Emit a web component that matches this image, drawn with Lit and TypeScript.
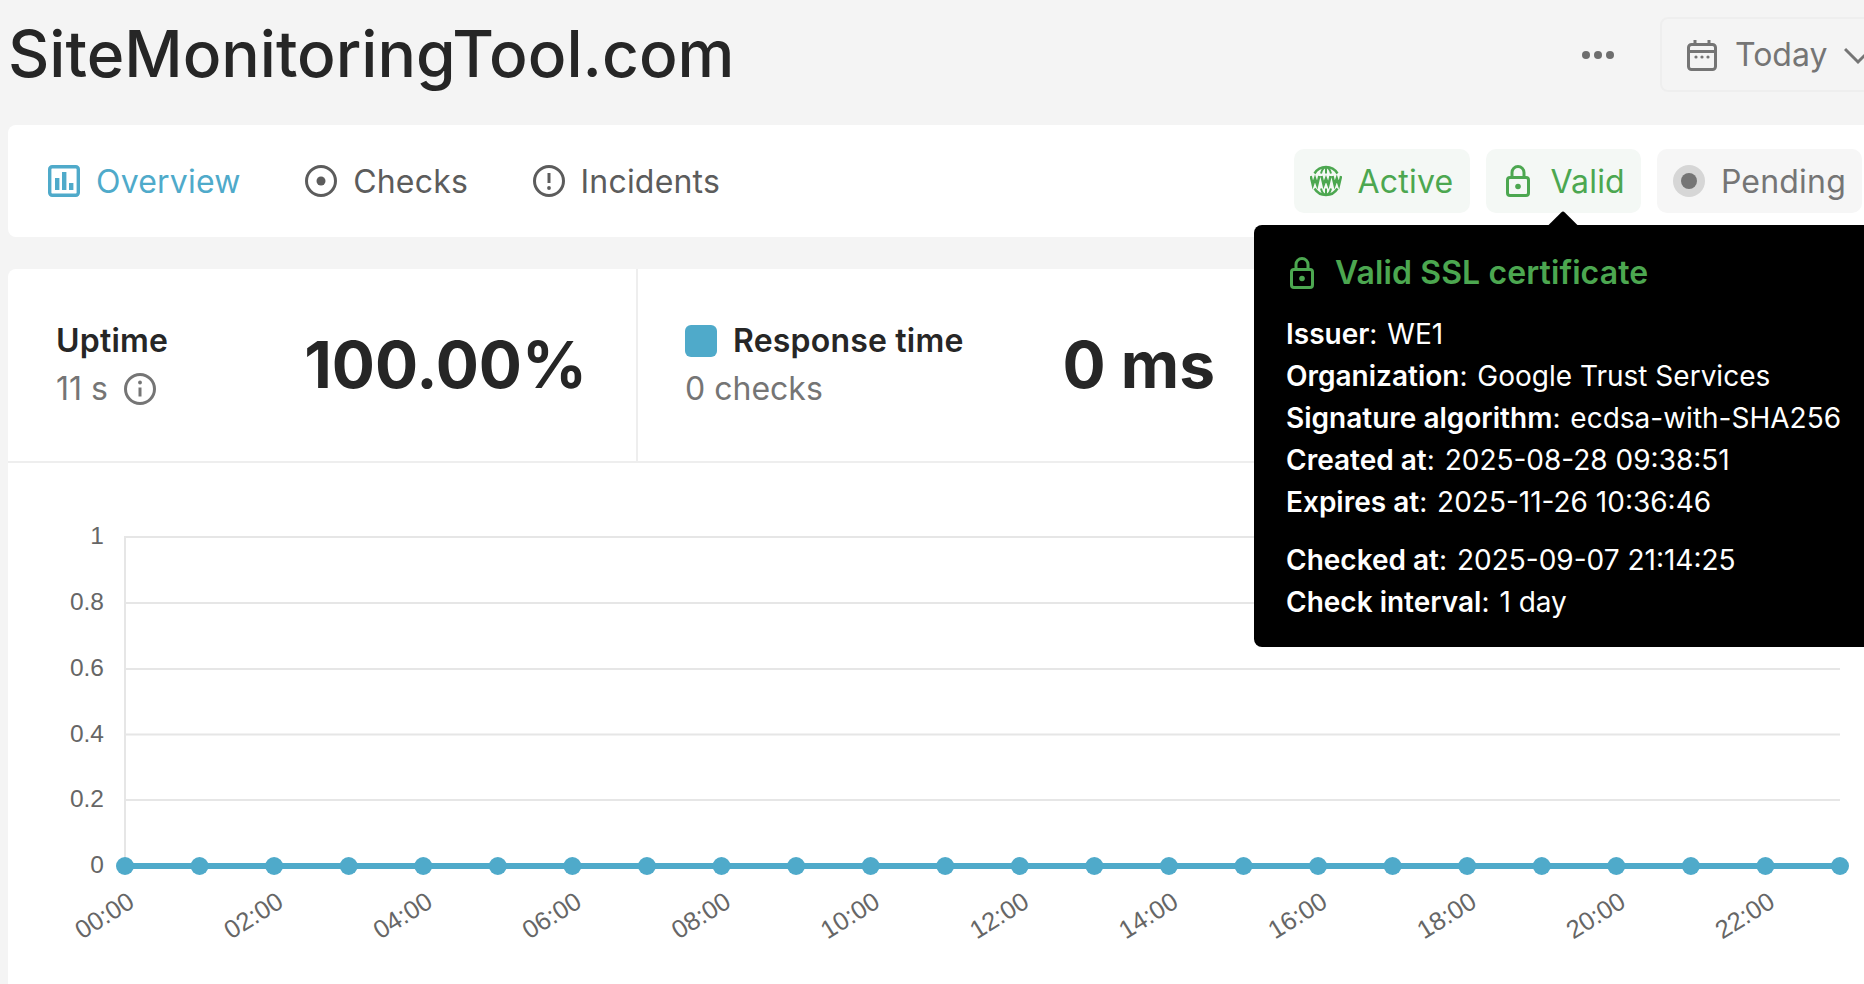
import { LitElement, html, css, svg } from "lit";
import { customElement } from "lit/decorators.js";

const BLUE = "#4faaca";
const hours = Array.from({ length: 24 }, (_, i) => i);
const xOf = (i: number) => 125 + (i * (1840 - 125)) / 23;
const yTicks = [
  ["1", 537],
  ["0.8", 603],
  ["0.6", 669],
  ["0.4", 734.5],
  ["0.2", 800],
  ["0", 866],
] as const;

const lock = html`<svg class="ico" viewBox="-4 0 32 32" fill="none" stroke="currentColor" stroke-width="3">
  <rect x="1.5" y="12.5" width="21" height="18" rx="2.5"></rect>
  <path d="M6 12.5V7.5a6 6 0 0 1 12 0v5"></path>
  <circle cx="12" cy="21.5" r="2.8" fill="currentColor" stroke="none"></circle>
</svg>`;

@customElement("app-root")
export class AppRoot extends LitElement {
  static styles = css`
    :host {
      display: block;
      width: 1864px;
      height: 984px;
      overflow: hidden;
      background: #f4f4f4;
      font-family: Inter, "Liberation Sans", sans-serif;
      color: #262626;
    }
    .page {
      position: relative;
      width: 1900px;
      height: 984px;
      padding-left: 8px;
      box-sizing: border-box;
    }
    .header {
      display: flex;
      align-items: center;
      justify-content: space-between;
      height: 75px;
      padding: 17px 0 33px;
    }
    h1 {
      margin: -2px 0 0;
      font-size: 64px;
      font-weight: 500;
      line-height: 75px;
    }
    .actions {
      display: flex;
      align-items: center;
      gap: 46px;
    }
    .dots {
      display: flex;
      gap: 4px;
    }
    .dots i {
      width: 8px;
      height: 8px;
      border-radius: 50%;
      background: #6e6e6e;
    }
    .today {
      width: 240px;
      height: 75px;
      box-sizing: border-box;
      border: 2px solid #eeeeee;
      border-radius: 8px;
      display: flex;
      align-items: center;
      padding-left: 24px;
      gap: 17px;
      color: #757575;
      font-size: 32px;
    }
    .ico {
      display: block;
      flex: none;
      width: 32px;
      height: 32px;
    }
    .nav {
      height: 112px;
      background: #fff;
      border-radius: 8px;
      display: flex;
      align-items: center;
      padding: 0 38px 0 40px;
      font-size: 32px;
      letter-spacing: 0.2px;
    }
    .tab {
      display: flex;
      align-items: center;
      gap: 16px;
      color: #5c5c5c;
      margin-right: 64.5px;
    }
    .tab.active {
      color: #4faaca;
    }
    .pills {
      margin-left: auto;
      display: flex;
      gap: 16px;
    }
    .pill {
      height: 64px;
      border-radius: 10px;
      display: flex;
      align-items: center;
      padding: 0 16px;
      gap: 16px;
      background: #f4f8f5;
      color: #4ca750;
    }
    .pill.wide {
      padding-right: 17px;
    }
    .pill.gray {
      background: #f6f6f6;
      color: #757575;
    }
    .panel {
      margin-top: 32px;
      background: #fff;
      border-radius: 8px 8px 0 0;
    }
    .stats {
      display: flex;
      height: 192px;
      border-bottom: 2px solid #eeeeee;
    }
    .stat {
      width: 630px;
      box-sizing: border-box;
      display: flex;
      align-items: center;
      justify-content: space-between;
      padding: 0 49px 0 48px;
      border-right: 2px solid #eeeeee;
    }
    .stat.second {
      width: 624px;
      padding-left: 47px;
      padding-right: 47px;
      border-right: 0;
    }
    .label {
      font-size: 32px;
      font-weight: 600;
      line-height: 48px;
      letter-spacing: 0.2px;
      display: flex;
      align-items: center;
      gap: 16px;
    }
    .square {
      width: 32px;
      height: 32px;
      border-radius: 6px;
      background: #4faaca;
    }
    .sub {
      font-size: 32px;
      line-height: 48px;
      color: #757575;
      display: flex;
      align-items: center;
      gap: 16px;
    }
    .value {
      font-size: 64px;
      font-weight: 700;
      line-height: 76px;
    }
    .chart {
      display: block;
      width: 1856px;
      height: 521px;
    }
    .chart text {
      font-family: "Liberation Sans", Arial, sans-serif;
      font-size: 24.5px;
      fill: #666;
    }
    .chart text.hour {
      font-size: 25.5px;
    }
    .tip {
      position: absolute;
      left: 1254px;
      top: 225px;
      width: 640px;
      height: 422px;
      box-sizing: border-box;
      background: #000;
      color: #fff;
      border-radius: 8px;
      padding: 28px 0 0 32px;
      font-size: 28px;
      line-height: 42px;
    }
    .tip::before {
      content: "";
      position: absolute;
      left: 297px;
      top: -12px;
      width: 24px;
      height: 24px;
      background: #000;
      transform: rotate(45deg) scale(0.85);
      border-radius: 3px 0 0 0;
    }
    .tip h2 {
      margin: 0 0 20px;
      display: flex;
      align-items: center;
      gap: 17px;
      color: #4ca750;
      font-size: 32px;
      font-weight: 600;
      line-height: 40px;
      letter-spacing: 0.1px;
    }
    .tip p {
      margin: 0;
      white-space: nowrap;
    }
    .tip .gap {
      margin-top: 16px;
    }
    .tip b {
      font-weight: 600;
    }
    .tip .v {
      margin-left: 2px;
    }
  `;

  render() {
    return html`<div class="page">
      <header class="header">
        <h1>SiteMonitoringTool.com</h1>
        <div class="actions">
          <div class="dots"><i></i><i></i><i></i></div>
          <div class="today">
            <svg class="ico" viewBox="0 0 32 32" fill="none" stroke="currentColor" stroke-width="3">
              <rect x="2.5" y="5.5" width="27" height="25" rx="3"></rect>
              <path d="M2.5 12.5h27M9 1v6M23 1v6"></path>
              <circle cx="10" cy="18" r="1.6" fill="currentColor" stroke="none"></circle>
              <circle cx="16" cy="18" r="1.6" fill="currentColor" stroke="none"></circle>
              <circle cx="22" cy="18" r="1.6" fill="currentColor" stroke="none"></circle>
            </svg>
            <span>Today</span>
            <svg class="ico" viewBox="0 0 32 32" fill="none" stroke="currentColor" stroke-width="3">
              <path d="M1 10l13 13 13-13"></path>
            </svg>
          </div>
        </div>
      </header>

      <nav class="nav">
        <div class="tab active">
          <svg class="ico" viewBox="0 0 32 32" fill="none" stroke="currentColor" stroke-width="3.4">
            <rect x="1.7" y="1.7" width="28.6" height="28.6" rx="2.5"></rect>
            <g fill="currentColor" stroke="none">
              <rect x="7" y="13" width="4.4" height="12"></rect>
              <rect x="14" y="7" width="4.4" height="18"></rect>
              <rect x="21" y="18" width="4.4" height="7"></rect>
            </g>
          </svg>
          <span>Overview</span>
        </div>
        <div class="tab">
          <svg class="ico" viewBox="0 0 32 32" fill="none" stroke="currentColor" stroke-width="3">
            <circle cx="16" cy="16" r="14.5"></circle>
            <circle cx="16" cy="16" r="4.5" fill="currentColor" stroke="none"></circle>
          </svg>
          <span>Checks</span>
        </div>
        <div class="tab">
          <svg class="ico" viewBox="0 0 32 32" fill="none" stroke="currentColor" stroke-width="3">
            <circle cx="16" cy="16" r="14.5"></circle>
            <path d="M16 8v10"></path>
            <circle cx="16" cy="23" r="1.9" fill="currentColor" stroke="none"></circle>
          </svg>
          <span>Incidents</span>
        </div>
        <div class="pills">
          <div class="pill wide">
            <svg class="ico" viewBox="0 0 32 32" fill="none" stroke="currentColor">
              <path stroke-width="2.4" d="M4.5 8.5a13.5 13.5 0 0 1 23 0M4.5 23.5a13.5 13.5 0 0 0 23 0"></path>
              <path stroke-width="2" d="M11 8.5c.8-3.5 2.8-6 5-6.5 2.2.5 4.200 3 5 6.500M11 23.500c.8 3.500 2.800 6 5 6.500 2.200-.5 4.200-3 5-6.500M16 2v6.500M16 23.500V30"></path>
              <path stroke-width="2.5" d="M.7 11l2.100 9 2.200-6.500 2.200 6.500 2.100-9M11.500 11l2.100 9 2.400-6.500 2.400 6.500 2.100-9M22.500 11l2.100 9 2.200-6.500 2.200 6.500 2.100-9"></path>
            </svg>
            <span>Active</span>
          </div>
          <div class="pill">${lock}<span>Valid</span></div>
          <div class="pill gray">
            <svg class="ico" viewBox="0 0 32 32">
              <circle cx="16" cy="16" r="16" fill="#d6d6d6"></circle>
              <circle cx="16" cy="16" r="8" fill="#757575"></circle>
            </svg>
            <span>Pending</span>
          </div>
        </div>
      </nav>

      <section class="panel">
        <div class="stats">
          <div class="stat">
            <div>
              <div class="label">Uptime</div>
              <div class="sub">
                <span>11 s</span>
                <svg class="ico" viewBox="0 0 32 32" fill="none" stroke="currentColor" stroke-width="3">
                  <circle cx="16" cy="16" r="14.5"></circle>
                  <path d="M16 14.5v9"></path>
                  <circle cx="16" cy="9.5" r="1.9" fill="currentColor" stroke="none"></circle>
                </svg>
              </div>
            </div>
            <div class="value">100.00%</div>
          </div>
          <div class="stat second">
            <div>
              <div class="label"><span class="square"></span><span>Response time</span></div>
              <div class="sub"><span>0 checks</span></div>
            </div>
            <div class="value">0 ms</div>
          </div>
        </div>
        <svg class="chart" viewBox="8 463 1856 521">
          <g stroke="#e6e6e6" stroke-width="2" fill="none">
            ${yTicks.map(([, y]) => svg`<line x1="125" x2="1840" y1=${y} y2=${y}></line>`)}
            <line x1="125" x2="125" y1="536" y2="866"></line>
          </g>
          ${yTicks.map(
            ([t, y]) => svg`<text x="104" y=${y + 7} text-anchor="end">${t}</text>`
          )}
          <line x1=${xOf(0)} x2=${xOf(23)} y1="866" y2="866" stroke=${BLUE} stroke-width="6"></line>
          ${hours.map((i) => svg`<circle cx=${xOf(i)} cy="866" r="9" fill=${BLUE}></circle>`)}
          ${hours
            .filter((i) => i % 2 === 0)
            .map((i) => {
              const x = xOf(i) + 11;
              const label = `${String(i).padStart(2, "0")}:00`;
              return svg`<text class="hour" x=${x} y="906" text-anchor="end" transform="rotate(-32 ${x} 906)">${label}</text>`;
            })}
        </svg>
      </section>

      <aside class="tip">
        <h2>${lock}<span>Valid SSL certificate</span></h2>
        <p><b>Issuer</b>: <span class="v">WE1</span></p>
        <p><b>Organization</b>: <span class="v">Google Trust Services</span></p>
        <p><b>Signature algorithm</b>: <span class="v">ecdsa-with-SHA256</span></p>
        <p><b>Created at</b>: <span class="v">2025-08-28 09:38:51</span></p>
        <p><b>Expires at</b>: <span class="v">2025-11-26 10:36:46</span></p>
        <p class="gap"><b>Checked at</b>: <span class="v">2025-09-07 21:14:25</span></p>
        <p><b>Check interval</b>: <span class="v">1 day</span></p>
      </aside>
    </div>`;
  }
}
